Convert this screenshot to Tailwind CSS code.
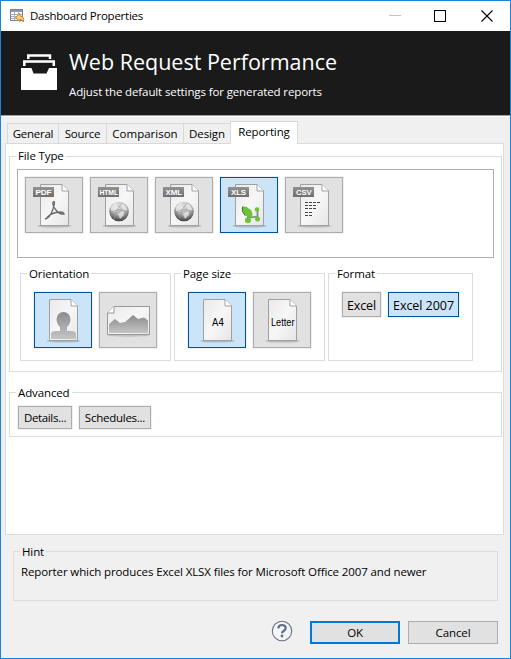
<!DOCTYPE html>
<html lang="en">
<head>
<meta charset="utf-8">
<title>Dashboard Properties</title>
<script src="https://cdn.jsdelivr.net/npm/@tailwindcss/browser@4"></script>
</head>
<body class="w-[511px] h-[659px] overflow-hidden font-['Open_Sans','Noto_Sans',sans-serif] text-[11.5px] tracking-[-0.12px] leading-[16px] text-black">
<svg width="0" height="0" class="absolute">
  <defs>
    <linearGradient id="paper" x1="0" y1="0" x2="1" y2="1"><stop offset="0" stop-color="#e9e9e9"/><stop offset=".5" stop-color="#f7f7f7"/><stop offset="1" stop-color="#e6e6e6"/></linearGradient>
    <linearGradient id="tag" x1="0" y1="0" x2="0" y2="1"><stop offset="0" stop-color="#929292"/><stop offset="1" stop-color="#6e6e6e"/></linearGradient>
    <linearGradient id="shade" x1="0" y1="0" x2="0" y2="1"><stop offset="0" stop-color="#8c8c8c"/><stop offset="1" stop-color="#c4c4c4"/></linearGradient>
    <radialGradient id="ball" cx=".5" cy=".2" r=".8"><stop offset="0" stop-color="#dcdcdc"/><stop offset=".55" stop-color="#b0b0b0"/><stop offset="1" stop-color="#3c3c3c"/></radialGradient>
    <g id="page">
      <ellipse cx="29.500" cy="49" rx="17" ry="1.600" fill="#000" opacity=".18"/>
      <path d="M15.500 7.500H37L43.500 14V48.500H15.500Z" fill="url(#paper)" stroke="#a0a0a0"/>
      <path d="M37 7.500V14H43.500" fill="#fff" stroke="#a0a0a0"/>
    </g>
    <g id="globe">
      <circle cx="29" cy="34.500" r="9.800" fill="url(#ball)"/>
      <path d="M20.500 31q2-5 7-5.500l-1 3.500 3 2-3 4-5-1zM30 26l5 2 2.500 5-4 1zM28 37l5-3 1 4-4 4z" fill="#f4f4f4" opacity=".65"/>
      <path d="M20 36q9-6 18-1M24 42q1-9 8-16" fill="none" stroke="#909090" stroke-width=".6"/>
    </g>
  </defs>
</svg>
<div class="w-full h-full border border-[#1883d7] bg-[#f0f0f0] flex flex-col">
  <header class="h-[30px] shrink-0 bg-white flex items-center pl-[9px]">
    <svg width="15" height="14" viewBox="0 0 15 14" class="mb-px">
      <rect x=".5" y=".5" width="12" height="11" fill="#fff" stroke="#76839a"/>
      <path d="M1 1h11v2H1z" fill="#8d99ad"/>
      <path d="M1 5.500h11M1 7.500h11M1 9.500h11M4.500 3v8M8.500 3v8" stroke="#a9b1c0"/>
      <path d="M10 4.500L5.500 8.500 10 12.500V10.300Q12 10.300 13.300 13Q15 8 10 6.800Z" fill="#f8cf7c" stroke="#c37a22" stroke-width=".9"/>
    </svg>
    <span class="ml-[5px] tracking-[-0.25px]">Dashboard Properties</span>
    <svg width="106" height="14" viewBox="0 0 106 14" class="ml-auto mr-[15px]" fill="none">
      <path d="M0 6.500h12" stroke="#c4c4c4"/>
      <rect x="45.500" y="1.500" width="11" height="11" stroke="#000"/>
      <path d="M92.500 1.500l11 11M103.500 1.500l-11 11" stroke="#000" stroke-width="1.100"/>
    </svg>
  </header>
  <section class="h-[84px] shrink-0 bg-[#1a1a1a] text-white flex pl-[20px]">
    <svg width="36" height="36" viewBox="0 0 36 36" class="mt-[23px]">
      <path d="M0 14h10.500l2 5.500h13l2.500-5.500h8v22H0z" fill="#fff"/>
      <path d="M3.300 12V7.500h29.500V12M7.300 5V1.600h21.700V5" fill="none" stroke="#fff" stroke-width="2.500"/>
    </svg>
    <div class="ml-[12px] pt-[16px]">
      <h1 class="text-[21.500px] leading-[30px] tracking-normal">Web Request Performance</h1>
      <p class="mt-[7px]">Adjust the default settings for generated reports</p>
    </div>
  </section>
  <div class="h-[2px] shrink-0 bg-white border-t border-[#a0a0a0]"></div>
  <nav class="mt-[5px] h-[22px] shrink-0 flex items-end ml-[6px] relative z-10 -mb-px text-center whitespace-nowrap">
    <div class="w-[52px] h-[21px] border border-[#d9d9d9] pt-[2px] tracking-[-0.25px]">General</div>
    <div class="w-[48px] h-[21px] border border-l-0 border-[#d9d9d9] pt-[2px] tracking-[-0.2px]">Source</div>
    <div class="w-[77px] h-[21px] border border-l-0 border-[#d9d9d9] pt-[2px] tracking-normal">Comparison</div>
    <div class="w-[46px] h-[21px] border border-x-0 border-[#d9d9d9] pt-[2px]">Design</div>
    <div class="w-[68px] h-[23px] border border-b-0 border-[#d9d9d9] bg-white pt-[2px]">Reporting</div>
  </nav>
  <main class="ml-[4px] w-[499px] h-[392px] shrink-0 bg-white border border-[#dcdcdc] px-[3px] pt-[12px]">
    <section class="relative h-[216px] w-[493px] border border-[#dcdcdc] px-[7px] pt-[12px]">
      <h2 class="absolute -top-[9px] left-[6px] bg-white px-[2px] whitespace-nowrap">File Type</h2>
      <div class="h-[89px] w-[477px] border border-[#abadb3] flex gap-[7px] pl-[7px] pt-[7px]">
        <div class="w-[58px] h-[56px] border border-[#adadad] bg-[#e1e1e1] outline outline-[#f0f0f0]">
          <svg width="56" height="54" viewBox="1 1 56 54"><use href="#page"/><rect x="8" y="10" width="21" height="10" fill="url(#tag)"/><text x="10.500" y="18" textLength="16" lengthAdjust="spacingAndGlyphs" font-size="8" font-weight="700" font-family="Liberation Sans" fill="#fff">PDF</text>
            <path d="M20 42q5-1 8-10t0-7q-1 3 3 8t8 4q-1-3-8-1.500T21 42" fill="none" stroke="#6a6a6a" stroke-width="1.300"/></svg>
        </div>
        <div class="w-[58px] h-[56px] border border-[#adadad] bg-[#e1e1e1] outline outline-[#f0f0f0]">
          <svg width="56" height="54" viewBox="1 1 56 54"><use href="#page"/><use href="#globe"/><rect x="8" y="10" width="21" height="10" fill="url(#tag)"/><text x="9.500" y="18" textLength="18.500" lengthAdjust="spacingAndGlyphs" font-size="8" font-weight="700" font-family="Liberation Sans" fill="#fff">HTML</text></svg>
        </div>
        <div class="w-[58px] h-[56px] border border-[#adadad] bg-[#e1e1e1] outline outline-[#f0f0f0]">
          <svg width="56" height="54" viewBox="1 1 56 54"><use href="#page"/><use href="#globe"/><rect x="8" y="10" width="21" height="10" fill="url(#tag)"/><text x="10.500" y="18" textLength="16.500" lengthAdjust="spacingAndGlyphs" font-size="8" font-weight="700" font-family="Liberation Sans" fill="#fff">XML</text></svg>
        </div>
        <div class="w-[58px] h-[56px] border border-[#00539c] bg-[#cce4f7] outline outline-[#f0f0f0]">
          <svg width="56" height="54" viewBox="1 1 56 54"><use href="#page"/><rect x="8" y="10" width="21" height="10" fill="url(#tag)"/><text x="11" y="18" textLength="15" lengthAdjust="spacingAndGlyphs" font-size="8" font-weight="700" font-family="Liberation Sans" fill="#fff">XLS</text>
            <path d="M27 40q6 1 11-1M37.500 33v9" fill="none" stroke="#8a8a8a" stroke-width="1.800"/>
            <path d="M22.500 29.500q-1.500 5 2.500 9l7 2.500.5-4q-1-5-4-5.500-1-2.500-6-2z" fill="#6cc534"/>
            <path d="M22.500 29.500q-1.500 5 2.500 9" fill="none" stroke="#444" stroke-width=".8"/>
            <circle cx="28" cy="43.200" r="3" fill="#6cc534"/><circle cx="37" cy="32.500" r="2.300" fill="#6cc534"/><circle cx="37.500" cy="42" r="2.500" fill="#6cc534"/></svg>
        </div>
        <div class="w-[58px] h-[56px] border border-[#adadad] bg-[#e1e1e1] outline outline-[#f0f0f0]">
          <svg width="56" height="54" viewBox="1 1 56 54"><use href="#page"/><rect x="8" y="10" width="21" height="10" fill="url(#tag)"/><text x="11" y="18" textLength="15.500" lengthAdjust="spacingAndGlyphs" font-size="8" font-weight="700" font-family="Liberation Sans" fill="#fff">CSV</text>
            <path d="M20 25.500h15M20 28.500h12M20 31.500h11M20 35.500h7M20 38.500h7" stroke="#444" stroke-dasharray="3 1"/></svg>
        </div>
      </div>
      <div class="mt-[15px] flex gap-[3px] pl-[3px]">
        <section class="relative w-[151px] h-[88px] border border-[#dcdcdc] pl-[13px] pt-[18px] flex gap-[7px]">
          <h3 class="absolute -top-[8px] left-[6px] bg-white px-[2px] whitespace-nowrap">Orientation</h3>
          <div class="w-[58px] h-[56px] border border-[#00539c] bg-[#cce4f7] outline outline-[#f0f0f0]">
            <svg width="56" height="54" viewBox="1 1 56 54"><use href="#page"/><path d="M17 47v-5q0-3 5-3h4v-4q-3.500-3-3.500-8 1-7 7-7t7 7q0 5-3.500 8v4h4q5 0 5 3v5z" fill="url(#shade)"/></svg>
          </div>
          <div class="w-[58px] h-[56px] border border-[#adadad] bg-[#e1e1e1] outline outline-[#f0f0f0]">
            <svg width="56" height="54" viewBox="1 1 56 54"><ellipse cx="29.500" cy="43.500" rx="21" ry="1.200" fill="#000" opacity=".15"/><path d="M8.500 21L15 14.500H50.500V42.500H8.500Z" fill="url(#paper)" stroke="#999"/><path d="M15 14.500V21H8.500" fill="#fff" stroke="#999"/><path d="M10 41V32l6-5 5 4 5-1 8-7 5 4 6-1.500 4 3V41z" fill="url(#shade)"/></svg>
          </div>
        </section>
        <section class="relative w-[151px] h-[88px] border border-[#dcdcdc] pl-[13px] pt-[18px] flex gap-[7px]">
          <h3 class="absolute -top-[8px] left-[6px] bg-white px-[2px] whitespace-nowrap">Page size</h3>
          <div class="w-[58px] h-[56px] border border-[#00539c] bg-[#cce4f7] outline outline-[#f0f0f0]">
            <svg width="56" height="54" viewBox="1 1 56 54"><use href="#page"/><text x="24" y="34" textLength="12" lengthAdjust="spacingAndGlyphs" font-size="10" font-family="DejaVu Sans">A4</text></svg>
          </div>
          <div class="w-[58px] h-[56px] border border-[#adadad] bg-[#e1e1e1] outline outline-[#f0f0f0]">
            <svg width="56" height="54" viewBox="1 1 56 54"><use href="#page"/><text x="18" y="33.500" textLength="23.500" lengthAdjust="spacingAndGlyphs" letter-spacing="0" font-size="10" font-family="Liberation Sans">Letter</text></svg>
          </div>
        </section>
        <section class="relative w-[145px] h-[88px] border border-[#dcdcdc] pl-[13px] pt-[18px] flex gap-[7px]">
          <h3 class="absolute -top-[8px] left-[6px] bg-white px-[2px] whitespace-nowrap">Format</h3>
          <div class="w-[39px] h-[25px] border border-[#adadad] bg-[#e1e1e1] outline outline-[#f0f0f0] text-[12.500px] leading-[25px] flex justify-center whitespace-nowrap">Excel</div>
          <div class="w-[71px] h-[25px] border border-[#00539c] bg-[#cce4f7] outline outline-[#f0f0f0] text-[12.500px] leading-[25px] flex justify-center whitespace-nowrap tracking-[-0.05px]">Excel 2007</div>
        </section>
      </div>
    </section>
    <section class="relative mt-[20px] h-[45px] w-[493px] border border-[#dcdcdc] pl-[8px] pt-[13px] flex gap-[7px]">
      <h2 class="absolute -top-[8px] left-[6px] bg-white px-[2px] whitespace-nowrap">Advanced</h2>
      <div class="w-[54px] h-[23px] border border-[#adadad] bg-[#e1e1e1] outline outline-[#f0f0f0] leading-[22px] flex justify-center whitespace-nowrap tracking-[-0.35px]">Details...</div>
      <div class="w-[72px] h-[23px] border border-[#adadad] bg-[#e1e1e1] outline outline-[#f0f0f0] leading-[22px] flex justify-center whitespace-nowrap tracking-[-0.25px]">Schedules...</div>
    </section>
  </main>
  <section class="relative mt-[16px] ml-[12px] w-[485px] h-[50px] shrink-0 border border-[#dcdcdc] pl-[7px] pt-[12px]">
    <h2 class="absolute -top-[8px] left-[6px] bg-[#f0f0f0] px-[2px] whitespace-nowrap">Hint</h2>
    <p>Reporter which produces Excel XLSX files for Microsoft Office 2007 and newer</p>
  </section>
  <footer class="mt-[20px] mr-[12px] flex justify-end">
    <svg width="22" height="22" viewBox="0 0 22 22" class="mr-[17px] -mt-px">
      <circle cx="11" cy="11" r="9.700" fill="#f4f5f7" stroke="#667085" stroke-width="1.100"/>
      <path d="M7.300 8.300Q7.600 5 11 5T14.700 8Q14.700 9.800 12.700 11 11 12 11 13.300" fill="none" stroke="#5f6b85" stroke-width="2.200"/>
      <circle cx="11" cy="16" r="1.400" fill="#5f6b85"/>
    </svg>
    <button class="w-[90px] h-[23px] border-2 border-[#0078d7] bg-[#e1e1e1] leading-[20px] mr-[8px]">OK</button>
    <button class="w-[90px] h-[23px] border border-[#adadad] bg-[#e1e1e1] leading-[22px]">Cancel</button>
  </footer>
</div>
</body>
</html>
